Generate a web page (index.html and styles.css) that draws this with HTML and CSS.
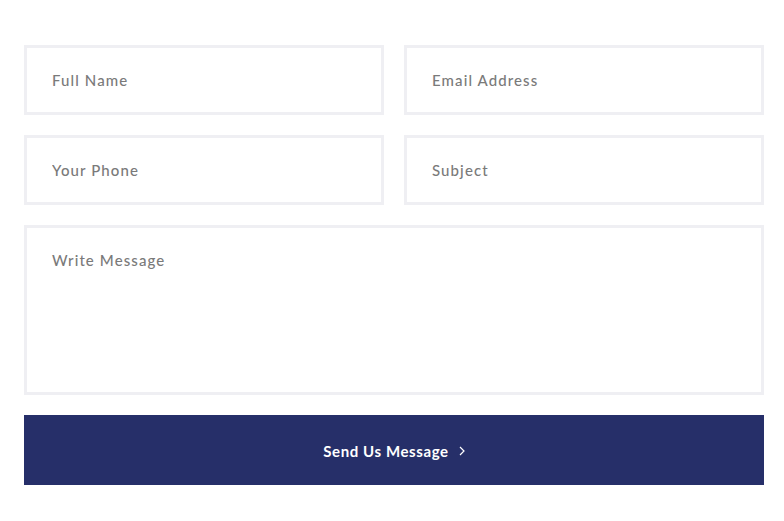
FILE: index.html
```html
<!DOCTYPE html>
<html>
<head>
<meta charset="utf-8">
<link rel="stylesheet" href="styles.css">
</head>
<body>
<form class="form">
  <div class="row">
    <input class="field" type="text" placeholder="Full Name">
    <input class="field" type="text" placeholder="Email Address">
  </div>
  <div class="row">
    <input class="field" type="text" placeholder="Your Phone">
    <input class="field" type="text" placeholder="Subject">
  </div>
  <textarea class="field area" placeholder="Write Message"></textarea>
  <button class="btn" type="button">Send Us Message <span class="chev"><svg width="6" height="10" viewBox="0 0 6 10"><path d="M1 1l4 4-4 4" fill="none" stroke="#fff" stroke-width="1.2"/></svg></span></button>
</form>
</body>
</html>
```
FILE: styles.css
```css
* { box-sizing: border-box; }
html, body { margin: 0; background: #fff; }
body { font-family: "Lato", "Liberation Sans", sans-serif; }
.form {
  display: flex;
  flex-direction: column;
  gap: 20px;
  padding: 45px 20px 0 24px;
}
.row {
  display: grid;
  grid-template-columns: 1fr 1fr;
  gap: 20px;
}
.field {
  display: block;
  width: 100%;
  height: 70px;
  border: 3px solid #efeff3;
  background: #fff;
  padding: 0 25px;
  font-family: inherit;
  font-size: 15px;
  font-weight: 500;
  letter-spacing: 1.1px;
  color: #777;
  outline: none;
}
.field::placeholder { color: #7a7a7a; }
.area {
  height: 170px;
  padding-top: 23px;
  resize: none;
}
.btn {
  height: 70px;
  border: 0;
  background: #262f69;
  color: #fff;
  font-family: inherit;
  font-weight: 700;
  font-size: 15px;
  letter-spacing: 0.6px;
  display: flex;
  align-items: center;
  justify-content: center;
  gap: 10px;
  padding-top: 2px;
}
.chev { display: inline-flex; }
```
